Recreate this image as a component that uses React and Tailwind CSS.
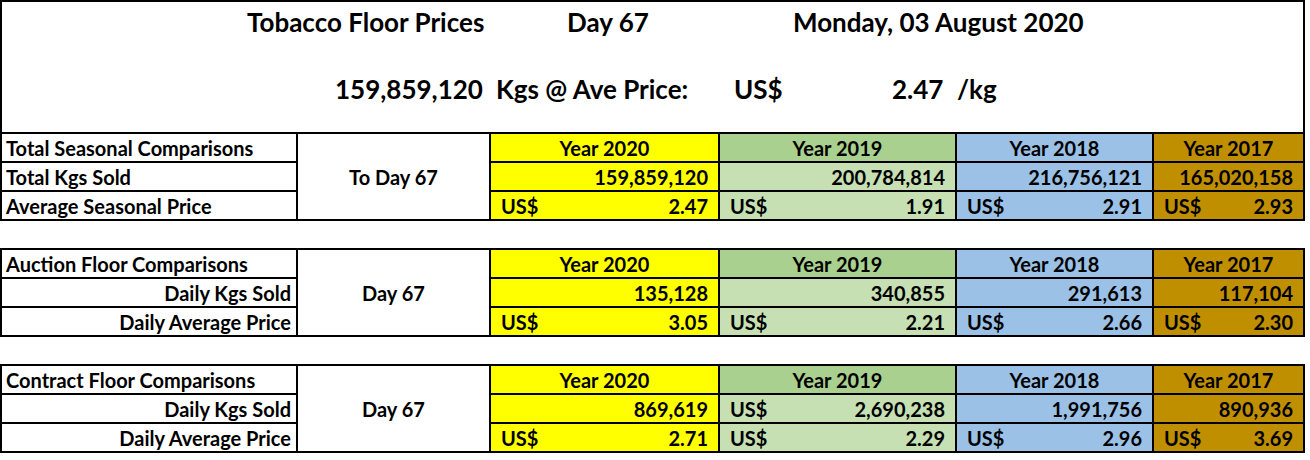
import React from "react";

const cols = "grid-cols-[294px_191px_227px_235px_195px_149px]";

const yearColours = {
  2020: { head: "bg-[#ffff00]", body: "bg-[#ffff00]" },
  2019: { head: "bg-[#a9d08e]", body: "bg-[#c6e0b4]" },
  2018: { head: "bg-[#9bc2e6]", body: "bg-[#9bc2e6]" },
  2017: { head: "bg-[#bf8f00]", body: "bg-[#bf8f00]" },
};

const years = [2020, 2019, 2018, 2017];

const Cell = ({ className = "", children }) => (
  <div className={`flex items-center overflow-hidden whitespace-nowrap ${className}`}>{children}</div>
);

const Value = ({ year, usd, value }) => (
  <Cell className={`${yearColours[year].body} justify-between pl-[10px] pr-[10px]`}>
    <span>{usd ? "US$" : ""}</span>
    <span>{value}</span>
  </Cell>
);

const ComparisonTable = ({ title, middle, labels, alignRight, kgs, prices, kgsUsd = [] }) => (
  <div className={`grid ${cols} grid-rows-[27px_27px_27px] gap-[2px] bg-black p-[2px] w-[1305px]`}>
    <Cell className="bg-white pl-[4px]">{title}</Cell>
    <Cell className="row-span-3 bg-white justify-center">{middle}</Cell>
    {years.map((y) => (
      <Cell key={y} className={`${yearColours[y].head} justify-center`}>
        Year {y}
      </Cell>
    ))}
    <Cell className={`bg-white ${alignRight ? "justify-end pr-[5px]" : "pl-[4px]"}`}>{labels[0]}</Cell>
    {years.map((y, i) => (
      <Value key={y} year={y} usd={kgsUsd.includes(y)} value={kgs[i]} />
    ))}
    <Cell className={`bg-white ${alignRight ? "justify-end pr-[5px]" : "pl-[4px]"}`}>{labels[1]}</Cell>
    {years.map((y, i) => (
      <Value key={y} year={y} usd value={prices[i]} />
    ))}
  </div>
);

export default function App() {
  return (
    <div className="w-[1310px] h-[460px] bg-white text-black font-bold overflow-hidden [font-family:Lato,'Open_Sans',sans-serif]">
      <div className="w-[1305px] h-[132px] border-t-2 border-x-2 border-black text-[26px] leading-none">
        <div className="flex items-center h-[40px]">
          <span className="w-[245px]" />
          <span className="w-[320px]">Tobacco Floor Prices</span>
          <span className="w-[226px]">Day 67</span>
          <span>Monday, 03 August 2020</span>
        </div>
        <div className="flex items-center h-[52px] mt-[21px]">
          <span className="w-[333px]" />
          <span className="w-[143px] text-right">159,859,120</span>
          <span className="w-[18px]" />
          <span className="w-[238px]">Kgs @ Ave Price:</span>
          <span className="w-[158px]">US$</span>
          <span className="w-[50px] text-right">2.47</span>
          <span className="w-[15px]" />
          <span>/kg</span>
        </div>
      </div>

      <div className="text-[20px] leading-none">
        <ComparisonTable
          title="Total Seasonal Comparisons"
          middle="To Day 67"
          labels={["Total Kgs Sold", "Average Seasonal Price"]}
          kgs={["159,859,120", "200,784,814", "216,756,121", "165,020,158"]}
          prices={["2.47", "1.91", "2.91", "2.93"]}
        />
        <div className="h-[27px]" />
        <ComparisonTable
          title="Auction Floor Comparisons"
          middle="Day 67"
          alignRight
          labels={["Daily Kgs Sold", "Daily Average Price"]}
          kgs={["135,128", "340,855", "291,613", "117,104"]}
          prices={["3.05", "2.21", "2.66", "2.30"]}
        />
        <div className="h-[27px]" />
        <ComparisonTable
          title="Contract Floor Comparisons"
          middle="Day 67"
          alignRight
          labels={["Daily Kgs Sold", "Daily Average Price"]}
          kgs={["869,619", "2,690,238", "1,991,756", "890,936"]}
          kgsUsd={[2019]}
          prices={["2.71", "2.29", "2.96", "3.69"]}
        />
      </div>
    </div>
  );
}
